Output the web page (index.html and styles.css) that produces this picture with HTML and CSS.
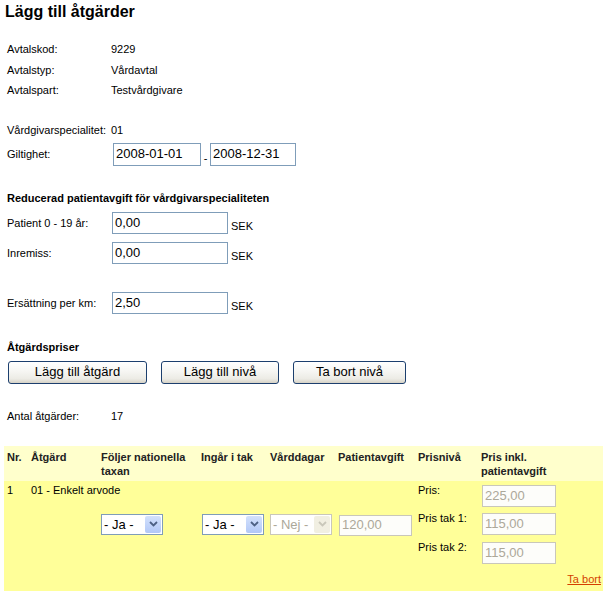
FILE: index.html
```html
<!DOCTYPE html>
<html lang="sv">
<head>
<meta charset="utf-8">
<title>Lägg till åtgärder</title>
<link rel="stylesheet" href="styles.css">
</head>
<body>
<div class="page">
  <h1 class="title">Lägg till åtgärder</h1>

  <div class="form">
    <div class="info">
      <div class="row"><span class="lbl">Avtalskod:</span><span>9229</span></div>
      <div class="row"><span class="lbl">Avtalstyp:</span><span>Vårdavtal</span></div>
      <div class="row"><span class="lbl">Avtalspart:</span><span>Testvårdgivare</span></div>
    </div>

    <div class="row spec"><span class="lbl">Vårdgivarspecialitet:</span><span>01</span></div>

    <div class="row field giltighet">
      <span class="lbl">Giltighet:</span>
      <span class="input date1">2008-01-01</span>
      <span class="dash">-</span>
      <span class="input date2">2008-12-31</span>
    </div>

    <div class="heading reducerad">Reducerad patientavgift för vårdgivarspecialiteten</div>

    <div class="row field patient">
      <span class="lbl">Patient 0 - 19 år:</span>
      <span class="input wide">0,00</span>
      <span class="unit">SEK</span>
    </div>
    <div class="row field inremiss">
      <span class="lbl">Inremiss:</span>
      <span class="input wide">0,00</span>
      <span class="unit">SEK</span>
    </div>
    <div class="row field km">
      <span class="lbl">Ersättning per km:</span>
      <span class="input wide">2,50</span>
      <span class="unit">SEK</span>
    </div>

    <div class="heading priser">Åtgärdspriser</div>
  </div>

  <div class="buttons">
    <button class="btn b1">Lägg till åtgärd</button>
    <button class="btn b2">Lägg till nivå</button>
    <button class="btn b3">Ta bort nivå</button>
  </div>

  <div class="form">
    <div class="row antal"><span class="lbl">Antal åtgärder:</span><span>17</span></div>
  </div>

  <div class="table">
    <div class="thead">
      <div class="th">Nr.</div>
      <div class="th">Åtgärd</div>
      <div class="th">Följer nationella taxan</div>
      <div class="th">Ingår i tak</div>
      <div class="th">Vårddagar</div>
      <div class="th">Patientavgift</div>
      <div class="th">Prisnivå</div>
      <div class="th th-last">Pris inkl. patientavgift</div>
    </div>
    <div class="tbody">
      <div class="td c-nr">1</div>
      <div class="td c-atg">01 - Enkelt arvode</div>
      <div class="td c-folj">
        <span class="select"><span class="sel-text">- Ja -</span><span class="sel-btn"><svg width="9" height="6" viewBox="0 0 9 6"><path d="M1 1 L4.5 4.5 L8 1" fill="none" stroke="#4d6185" stroke-width="1.8"/></svg></span></span>
      </div>
      <div class="td c-tak">
        <span class="select"><span class="sel-text">- Ja -</span><span class="sel-btn"><svg width="9" height="6" viewBox="0 0 9 6"><path d="M1 1 L4.5 4.5 L8 1" fill="none" stroke="#4d6185" stroke-width="1.8"/></svg></span></span>
      </div>
      <div class="td c-dagar">
        <span class="select disabled"><span class="sel-text">- Nej -</span><span class="sel-btn"><svg width="9" height="6" viewBox="0 0 9 6"><path d="M1 1 L4.5 4.5 L8 1" fill="none" stroke="#c9c7ba" stroke-width="1.8"/></svg></span></span>
      </div>
      <div class="td c-avg"><span class="input dis avg">120,00</span></div>
      <div class="td c-niva r1">Pris:</div>
      <div class="td c-pris r1"><span class="input dis pris">225,00</span></div>
      <div class="td c-niva r2">Pris tak 1:</div>
      <div class="td c-pris r2"><span class="input dis pris">115,00</span></div>
      <div class="td c-niva r3">Pris tak 2:</div>
      <div class="td c-pris r3"><span class="input dis pris">115,00</span></div>
    </div>
    <div class="tfoot"><a href="#" class="remove">Ta bort</a></div>
  </div>
</div>
</body>
</html>
```

FILE: styles.css
```css
html, body {
  margin: 0;
  padding: 0;
  background: #ffffff;
}

body {
  font-family: "Liberation Sans", Arial, sans-serif;
  font-size: 11px;
  color: #000;
}

.page {
  padding: 0 2px 0 4px;
}

.title {
  margin: 0 0 0 1px;
  font-size: 16px;
  font-weight: bold;
  line-height: 24px;
  height: 24px;
}

.form {
  padding-left: 3px;
}

.info {
  margin-top: 15px;
}

.row {
  display: flex;
  align-items: center;
  height: 20px;
  line-height: 20px;
}

.info .row {
  height: 20.5px;
}

.lbl {
  width: 104px;
  flex: none;
  white-space: nowrap;
}

.spec { margin-top: 19px; }

.field {
  height: 22px;
  align-items: flex-end;
}

.field .lbl {
  align-self: center;
  line-height: 14px;
}

.giltighet { margin-top: 3px; height: 23px; }
.patient { margin-top: 4px; }
.inremiss { margin-top: 8px; }
.km { margin-top: 28px; }

.heading {
  font-weight: bold;
  height: 20px;
  line-height: 20px;
}

.reducerad { margin-top: 22px; }
.priser { margin-top: 23px; }

.input {
  display: inline-flex;
  align-items: center;
  box-sizing: border-box;
  height: 22px;
  border: 1px solid #7f9db9;
  background: #fff;
  font-size: 13px;
  padding: 0 2px;
  line-height: 16px;
  white-space: nowrap;
}

.giltighet .input { height: 23px; }
.date1 { width: 88px; margin-left: 2px; }
.date2 { width: 86px; }
.dash {
  width: 9px;
  text-align: center;
  line-height: 12px;
  padding-bottom: 2px;
}

.wide { width: 116px; margin-left: 1px; }

.unit {
  margin-left: 3px;
  line-height: 12px;
  padding-bottom: 2px;
}

.buttons {
  display: flex;
  gap: 14px;
  margin: 4px 0 0 4px;
}

.btn {
  box-sizing: border-box;
  height: 23px;
  border: 1px solid #1c3f6e;
  border-radius: 3px;
  background: linear-gradient(#ffffff 0%, #f7f7f4 40%, #ecebe5 80%, #d6d2c6 100%);
  font-family: "Liberation Sans", Arial, sans-serif;
  font-size: 13px;
  color: #000;
  padding: 0;
  line-height: 20px;
}

.b1 { width: 139px; }
.b2 { width: 118px; }
.b3 { width: 113px; }

.antal { margin-top: 22px; }

.table {
  margin-top: 20px;
  width: 599px;
}

.thead, .tbody {
  display: grid;
  grid-template-columns: 24px 70px 100px 69px 68px 80px 63px 1fr;
}

.thead {
  background: #ffffcc;
  padding: 4px 0 3px;
}

.th {
  font-weight: bold;
  color: #222;
  line-height: 14px;
  padding-left: 3px;
}

.th-last {
  max-width: 80px;
}

.tbody {
  background: #ffff99;
  padding: 4px 0 4px;
  grid-template-rows: 22px 22px 22px;
  row-gap: 6.5px;
}

.td {
  padding-left: 3px;
}

.c-nr, .c-atg {
  grid-row: 1;
  line-height: 14px;
  margin-top: -2px;
  white-space: nowrap;
}
.c-nr { grid-column: 1; }
.c-atg { grid-column: 2; }

.c-folj, .c-tak, .c-dagar, .c-avg {
  grid-row: 1 / span 3;
  align-self: center;
}
.c-folj { grid-column: 3; }
.c-tak { grid-column: 4; padding-left: 4px; }
.c-dagar { grid-column: 5; }
.c-avg { grid-column: 6; padding-left: 4px; margin-top: 2px; }

.c-niva {
  grid-column: 7;
  line-height: 14px;
  margin-top: -2px;
}
.c-pris { grid-column: 8; padding-left: 4px; }
.r1 { grid-row: 1; }
.r2 { grid-row: 2; }
.r3 { grid-row: 3; }

.select {
  display: inline-flex;
  align-items: stretch;
  box-sizing: border-box;
  height: 21px;
  width: 62px;
  border: 1px solid #7f9db9;
  background: #fff;
  font-size: 13px;
}

.sel-text {
  flex: 1;
  display: flex;
  align-items: center;
  padding-left: 2px;
  white-space: nowrap;
}

.sel-btn {
  width: 16px;
  margin: 1px;
  border-radius: 2px;
  background: linear-gradient(#d3e1fc, #b2c8f7);
  display: flex;
  align-items: center;
  justify-content: center;
}

.select.disabled {
  border-color: #c9c7ba;
  color: #aca899;
}

.select.disabled .sel-btn {
  background: #f1efe2;
}

.input.dis {
  border-color: #c9c7ba;
  color: #aca899;
  background: #fdfdfa;
}

.avg { width: 73px; height: 21px; }
.pris { width: 74px; }

.tfoot {
  background: #ffff99;
  height: 23px;
  line-height: 22px;
  text-align: right;
  padding-right: 2px;
}

.remove {
  color: #d43f00;
  text-decoration: underline;
}
```
